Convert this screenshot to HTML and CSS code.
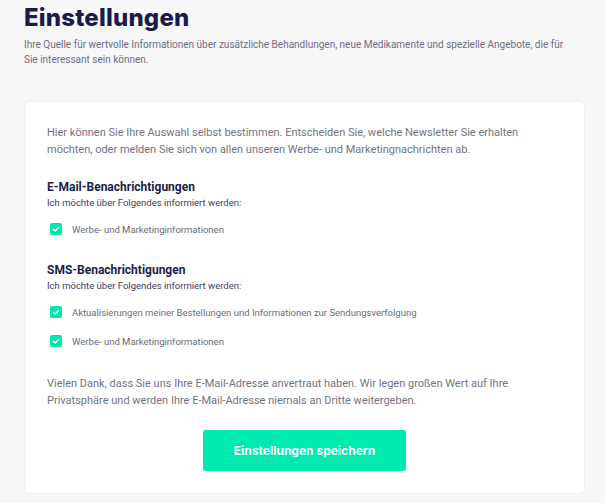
FILE: index.html
```html
<!DOCTYPE html>
<html lang="de">
<head>
    <meta charset="utf-8">
    <title>Einstellungen</title>
    <link rel="stylesheet" href="styles.css">
</head>
<body>

<div class="page">
    <h1>Einstellungen</h1>
    <p class="lead">Ihre Quelle für wertvolle Informationen über zusätzliche Behandlungen, neue Medikamente und spezielle Angebote, die für Sie interessant sein können.</p>

    <div class="card">
        <p class="text">Hier können Sie Ihre Auswahl selbst bestimmen. Entscheiden Sie, welche Newsletter Sie erhalten möchten, oder melden Sie sich von allen unseren Werbe- und Marketingnachrichten ab.</p>

        <div class="group">
            <h2>E-Mail-Benachrichtigungen</h2>
            <p class="hint">Ich möchte über Folgendes informiert werden:</p>
            <ul class="options">
                <li><span class="check"><svg viewBox="0 0 12 12"><path d="M3.3 6.2 5.2 8 8.8 4.3"/></svg></span>Werbe- und Marketinginformationen</li>
            </ul>
        </div>

        <div class="group sms">
            <h2>SMS-Benachrichtigungen</h2>
            <p class="hint">Ich möchte über Folgendes informiert werden:</p>
            <ul class="options">
                <li><span class="check"><svg viewBox="0 0 12 12"><path d="M3.3 6.2 5.2 8 8.8 4.3"/></svg></span>Aktualisierungen meiner Bestellungen und Informationen zur Sendungsverfolgung</li>
                <li><span class="check"><svg viewBox="0 0 12 12"><path d="M3.3 6.2 5.2 8 8.8 4.3"/></svg></span>Werbe- und Marketinginformationen</li>
            </ul>
        </div>

        <p class="text outro">Vielen Dank, dass Sie uns Ihre E-Mail-Adresse anvertraut haben. Wir legen großen Wert auf Ihre Privatsphäre und werden Ihre E-Mail-Adresse niemals an Dritte weitergeben.</p>

        <div class="actions">
            <button type="button">Einstellungen speichern</button>
        </div>
    </div>
</div>

</body>
</html>
```

FILE: styles.css
```css
body {
    margin: 0;
    font-family: Roboto, "Liberation Sans", sans-serif;
    background-color: #f7f7f8;
}
.page {
    padding: 3px 20px 0 24px;
}
h1 {
    margin: 0;
    font-family: Inter, "Liberation Sans", sans-serif;
    font-weight: 800;
    font-size: 24px;
    line-height: 30px;
    color: #1b1b4b;
    letter-spacing: 0.2px;
}
.lead {
    max-width: 548px;
    margin: 4px 0 0;
    font-size: 10px;
    line-height: 15px;
    color: #6d6d80;
}
.card {
    margin-top: 34px;
    padding: 22px;
    background: #fff;
    border: 1px solid #efeff3;
    border-radius: 6px;
}
.text {
    margin: 0;
    font-size: 11px;
    line-height: 17px;
    color: #737382;
}
.group {
    margin-top: 21px;
}
.group.sms {
    margin-top: 25px;
}
h2 {
    margin: 0;
    font-size: 12px;
    line-height: 16px;
    font-weight: 700;
    color: #1d1d4a;
}
.hint {
    margin: 1px 0 0;
    font-size: 9.5px;
    line-height: 14px;
    color: #3d3d5c;
}
.options {
    list-style: none;
    margin: 11px 0 0;
    padding: 0 0 0 3px;
    display: flex;
    flex-direction: column;
    gap: 13px;
}
.options li {
    display: flex;
    align-items: center;
    gap: 10px;
    height: 16px;
    font-size: 9.5px;
    color: #6b6b7c;
}
.check {
    width: 12px;
    height: 12px;
    border-radius: 2px;
    background: #00e6ae;
    display: flex;
}
.check svg {
    width: 12px;
    height: 12px;
    fill: none;
    stroke: #fff;
    stroke-width: 1.3;
    stroke-linecap: round;
    stroke-linejoin: round;
}
.outro {
    margin-top: 26px;
}
.actions {
    margin-top: 21px;
    text-align: center;
}
button {
    width: 203px;
    height: 41px;
    border: none;
    border-radius: 3px;
    background-color: #00eab0;
    color: #fff;
    font-family: Inter, "Liberation Sans", sans-serif;
    font-weight: 700;
    font-size: 12px;
    cursor: pointer;
}
```
